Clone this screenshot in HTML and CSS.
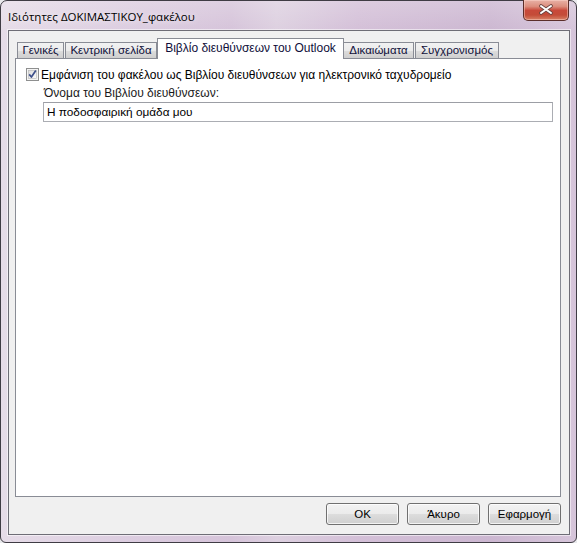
FILE: index.html
```html
<!DOCTYPE html>
<html lang="el">
<head>
<meta charset="utf-8">
<title>Ιδιότητες ΔΟΚΙΜΑΣΤΙΚΟΥ_φακέλου</title>
<link rel="stylesheet" href="styles.css">
</head>
<body>
<div class="window">
  <div class="titlebar">
    <span class="title">Ιδιότητες ΔΟΚΙΜΑΣΤΙΚΟΥ_φακέλου</span>
    <button class="close" aria-label="Κλείσιμο">
      <svg width="16" height="11" viewBox="0 0 16 11">
        <path d="M3 2 L13 9 M13 2 L3 9" stroke="#6a4440" stroke-width="3.6" stroke-linecap="round"/>
        <path d="M3 2 L13 9 M13 2 L3 9" stroke="#ffffff" stroke-width="2" stroke-linecap="round"/>
      </svg>
    </button>
  </div>
  <div class="client">
    <div class="tabs">
      <div class="tab t-general">Γενικές</div>
      <div class="tab t-home">Κεντρική σελίδα</div>
      <div class="tab active t-book">Βιβλίο διευθύνσεων του Outlook</div>
      <div class="tab t-perm">Δικαιώματα</div>
      <div class="tab t-sync">Συγχρονισμός</div>
    </div>
    <div class="panel">
      <label class="check-row">
        <span class="checkbox">
          <svg width="13" height="13" viewBox="0 0 13 13">
            <defs>
              <linearGradient id="cbfill" x1="0" y1="0" x2="1" y2="1">
                <stop offset="0" stop-color="#dcdcdc"/>
                <stop offset="1" stop-color="#fbfbfb"/>
              </linearGradient>
            </defs>
            <rect x="0.5" y="0.5" width="12" height="12" fill="#f4f4f4" stroke="#8e8f8f"/>
            <rect x="2.5" y="2.5" width="8" height="8" fill="url(#cbfill)" stroke="#b4b4b4" stroke-width="0.6"/>
            <path d="M3.2 6.4 L5.4 9 L9.8 2.6" fill="none" stroke="#3d4f8a" stroke-width="1.7" stroke-linejoin="round"/>
          </svg>
        </span>
        <span class="check-label">Εμφάνιση του φακέλου ως Βιβλίου διευθύνσεων για ηλεκτρονικό ταχυδρομείο</span>
      </label>
      <div class="field">
        <div class="field-label">Όνομα του Βιβλίου διευθύνσεων:</div>
        <div class="textbox">Η ποδοσφαιρική ομάδα μου</div>
      </div>
    </div>
    <div class="buttons">
      <button class="btn">OK</button>
      <button class="btn">Άκυρο</button>
      <button class="btn">Εφαρμογή</button>
    </div>
  </div>
</div>
</body>
</html>
```
FILE: styles.css
```css
html, body {
  margin: 0;
  padding: 0;
  background: #e9e9ec;
}

body {
  width: 577px;
  height: 543px;
  overflow: hidden;
  font-family: "Liberation Sans", Arial, sans-serif;
  font-size: 12px;
  color: #000;
}

.window {
  box-sizing: border-box;
  width: 577px;
  height: 543px;
  border: 1px solid #3f3c44;
  border-radius: 7px 7px 6px 6px;
  padding: 0 6px 7px 7px;
  display: flex;
  flex-direction: column;
  background:
    linear-gradient(180deg, rgba(255,255,255,0.2) 0px, rgba(255,255,255,0) 30px),
    linear-gradient(90deg, #e6dce8 0%, #dccde0 22%, #d6c4da 40%, #ddd0e0 48%, #d4c0d8 62%, #ccb7d1 85%, #d6c5da 100%);
}

.titlebar {
  height: 29px;
  display: flex;
  justify-content: space-between;
  align-items: flex-start;
}

.title {
  font-family: "Open Sans", "Noto Sans", sans-serif;
  font-size: 11.5px;
  line-height: 16px;
  margin-top: 8px;
  color: #000;
  text-shadow: 0 0 6px rgba(255,255,255,0.9);
}

.close {
  box-sizing: border-box;
  width: 46px;
  height: 21px;
  margin: -1px 1px 0 0;
  padding: 0;
  border: 1px solid #5b2e2a;
  border-top: none;
  border-radius: 0 0 5px 5px;
  display: flex;
  align-items: center;
  justify-content: center;
  background: linear-gradient(180deg, #e8b1a6 0%, #dc8e7e 32%, #c8493a 52%, #c44c38 75%, #d78266 100%);
  box-shadow: inset 0 0 0 1px rgba(255,220,210,0.45);
}

.close svg {
  display: block;
  margin-top: -1px;
}

.client {
  flex: 1;
  box-sizing: border-box;
  border: 1px solid #6e6d76;
  background: #f0f0f0;
  box-shadow: 0 0 0 1px rgba(255,255,255,0.55);
  padding: 7px 8px 9px 6px;
  display: flex;
  flex-direction: column;
}

.tabs {
  display: flex;
  align-items: flex-end;
  height: 20px;
  padding-left: 2px;
  position: relative;
  z-index: 1;
}

.tab {
  box-sizing: border-box;
  height: 16px;
  border: 1px solid #898c95;
  border-bottom: none;
  margin-right: 1px;
  background: linear-gradient(180deg, #f2f2f2 0%, #ebebeb 50%, #dddddd 51%, #cfcfcf 100%);
  text-align: center;
  line-height: 15px;
  font-size: 11.5px;
  white-space: nowrap;
  color: #10103a;
}

.t-general { width: 47px; }
.t-home { width: 92px; }
.t-book { width: 187px; }
.t-perm { width: 71px; }
.t-sync { width: 84px; }

.tab.active {
  height: 21px;
  margin: 0 0 -1px -1px;
  background: #fff;
  line-height: 18px;
  font-size: 12px;
}

.tab.active + .tab {
  margin-left: -1px;
}

.panel {
  flex: 1;
  border: 1px solid #898c95;
  background: #fff;
  padding: 9px 7px 0 10px;
}

.check-row {
  display: flex;
  align-items: center;
  height: 13px;
}

.checkbox {
  width: 13px;
  height: 13px;
  margin-right: 2px;
}

.checkbox svg {
  display: block;
}

.check-label {
  line-height: 13px;
  margin-top: 1px;
}

.field {
  margin-left: 17px;
}

.field-label {
  margin: 6px 0 0 1px;
  line-height: 13px;
  color: #1a1a1a;
}

.textbox {
  box-sizing: border-box;
  height: 20px;
  margin-top: 2px;
  border: 1px solid #abadb3;
  border-top-color: #9c9ea5;
  background: #fff;
  padding-left: 3px;
  line-height: 18px;
  font-size: 11.8px;
}

.buttons {
  display: flex;
  justify-content: flex-end;
  gap: 8px;
  margin-top: 6px;
}

.btn {
  box-sizing: border-box;
  width: 73px;
  height: 22px;
  padding: 0;
  border: 1px solid #707070;
  border-radius: 3px;
  font-family: "Liberation Sans", Arial, sans-serif;
  font-size: 11.5px;
  color: #000;
  background: linear-gradient(180deg, #f2f2f2 0%, #ebebeb 50%, #dddddd 51%, #cfcfcf 100%);
  box-shadow: inset 0 0 0 1px rgba(255,255,255,0.75);
}
```
